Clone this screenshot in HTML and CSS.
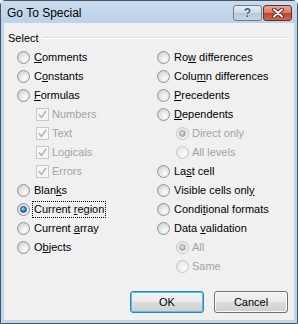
FILE: index.html
```html
<!DOCTYPE html>
<html lang="en">
<head>
    <meta charset="UTF-8">
    <title>Go To Special</title>
    <link rel="stylesheet" href="styles.css">
</head>
<body>
    <div class="window">
        <div class="titlebar">
            <span class="title">Go To Special</span>
            <div class="caption-buttons">
                <span class="cap-btn help">?</span>
                <span class="cap-btn close">
                    <svg width="14" height="10" viewBox="0 0 14 10">
                        <path d="M3 1.5 L11 8.5 M11 1.5 L3 8.5" stroke="#5a2a22" stroke-width="4" stroke-linecap="round"/>
                        <path d="M3 1.5 L11 8.5 M11 1.5 L3 8.5" stroke="#ffffff" stroke-width="2" stroke-linecap="round"/>
                    </svg>
                </span>
            </div>
        </div>
        <div class="client">
            <div class="group-head">
                <span>Select</span>
                <span class="rule"></span>
            </div>
            <div class="options">
                <div class="col">
                    <div class="opt"><span class="radio"></span><span class="lbl"><u>C</u>omments</span></div>
                    <div class="opt"><span class="radio"></span><span class="lbl">C<u>o</u>nstants</span></div>
                    <div class="opt"><span class="radio"></span><span class="lbl"><u>F</u>ormulas</span></div>
                    <div class="opt sub disabled"><span class="check"><svg width="11" height="11" viewBox="0 0 11 11"><path d="M2 5.5 L4.5 8.5 L9 2" fill="none" stroke="#b4b4b4" stroke-width="1.6"/></svg></span><span class="lbl">Numbers</span></div>
                    <div class="opt sub disabled"><span class="check"><svg width="11" height="11" viewBox="0 0 11 11"><path d="M2 5.5 L4.5 8.5 L9 2" fill="none" stroke="#b4b4b4" stroke-width="1.6"/></svg></span><span class="lbl">Text</span></div>
                    <div class="opt sub disabled"><span class="check"><svg width="11" height="11" viewBox="0 0 11 11"><path d="M2 5.5 L4.5 8.5 L9 2" fill="none" stroke="#b4b4b4" stroke-width="1.6"/></svg></span><span class="lbl">Logicals</span></div>
                    <div class="opt sub disabled"><span class="check"><svg width="11" height="11" viewBox="0 0 11 11"><path d="M2 5.5 L4.5 8.5 L9 2" fill="none" stroke="#b4b4b4" stroke-width="1.6"/></svg></span><span class="lbl">Errors</span></div>
                    <div class="opt"><span class="radio"></span><span class="lbl">Blan<u>k</u>s</span></div>
                    <div class="opt"><span class="radio checked"></span><span class="lbl focus">Current <u>r</u>egion</span></div>
                    <div class="opt"><span class="radio"></span><span class="lbl">Current <u>a</u>rray</span></div>
                    <div class="opt"><span class="radio"></span><span class="lbl">O<u>b</u>jects</span></div>
                </div>
                <div class="col">
                    <div class="opt"><span class="radio"></span><span class="lbl">Ro<u>w</u> differences</span></div>
                    <div class="opt"><span class="radio"></span><span class="lbl">Colu<u>m</u>n differences</span></div>
                    <div class="opt"><span class="radio"></span><span class="lbl"><u>P</u>recedents</span></div>
                    <div class="opt"><span class="radio"></span><span class="lbl"><u>D</u>ependents</span></div>
                    <div class="opt sub disabled"><span class="radio checked"></span><span class="lbl">Direct only</span></div>
                    <div class="opt sub disabled"><span class="radio"></span><span class="lbl">All levels</span></div>
                    <div class="opt"><span class="radio"></span><span class="lbl">La<u>s</u>t cell</span></div>
                    <div class="opt"><span class="radio"></span><span class="lbl">Visible cells onl<u>y</u></span></div>
                    <div class="opt"><span class="radio"></span><span class="lbl">Condi<u>t</u>ional formats</span></div>
                    <div class="opt"><span class="radio"></span><span class="lbl">Data <u>v</u>alidation</span></div>
                    <div class="opt sub disabled"><span class="radio checked"></span><span class="lbl">All</span></div>
                    <div class="opt sub disabled"><span class="radio"></span><span class="lbl">Same</span></div>
                </div>
            </div>
            <div class="buttons">
                <button class="btn default">OK</button>
                <button class="btn">Cancel</button>
            </div>
        </div>
    </div>
</body>
</html>
```

FILE: styles.css
```css
body {
    margin: 0;
    font-family: "Liberation Sans", Arial, sans-serif;
    font-size: 11px;
    background: #ffffff;
}
.window {
    width: 298px;
    height: 324px;
    box-sizing: border-box;
    border: 1px solid #47535f;
    border-radius: 5px 5px 0 0;
    background: #c0d4ea;
    padding: 0 3px 3px;
    display: flex;
    flex-direction: column;
}
.titlebar {
    height: 22px;
    display: flex;
    align-items: center;
    justify-content: space-between;
    background: linear-gradient(#c9dbee, #bcd2ea);
    margin: 0 -3px;
    padding: 0 5px 0 6px;
}
.title {
    font-size: 12px;
    color: #000;
    padding-top: 2px;
}
.caption-buttons {
    display: flex;
    gap: 1px;
    margin-top: 1px;
}
.cap-btn {
    width: 27px;
    height: 14px;
    border: 1px solid #6d7c8e;
    border-radius: 3px;
    display: flex;
    align-items: center;
    justify-content: center;
}
.help {
    background: linear-gradient(#e4edf7 0%, #cdd9e7 50%, #b6c7db 51%, #c7d6e7 100%);
    font-weight: bold;
    font-size: 12px;
    color: #4a5868;
    text-shadow: 0 0 1px #ffffff, 0 0 1px #ffffff;
}
.close {
    border-color: #6a2f24;
    background: linear-gradient(#e6a496 0%, #d47866 50%, #c1432d 51%, #d1684f 100%);
}
.client {
    flex: 1;
    background: #f0f0f0;
    display: flex;
    flex-direction: column;
}
.group-head {
    display: flex;
    align-items: center;
    padding: 8px 6px 0 4px;
    height: 13px;
    color: #000;
}
.rule {
    flex: 1;
    height: 1px;
    margin-left: 4px;
    background: #d5dfe5;
    border-bottom: 1px solid #ffffff;
}
.options {
    display: grid;
    grid-template-columns: 140px auto;
    padding: 4px 0 0 13px;
}
.opt {
    height: 19px;
    display: flex;
    align-items: center;
    color: #000;
    white-space: nowrap;
}
.opt.sub {
    padding-left: 19px;
}
.opt.disabled {
    color: #a3a3a3;
}
.lbl {
    margin-left: 4px;
    line-height: 13px;
}
.lbl.focus {
    outline: 1px dotted #000;
    outline-offset: 1px;
}
.radio {
    width: 11px;
    height: 11px;
    border-radius: 50%;
    border: 1px solid #949494;
    background: radial-gradient(circle at 62% 66%, #fdfdfd 0%, #e6e6e6 45%, #c6c6c6 100%);
    display: flex;
    align-items: center;
    justify-content: center;
    flex-shrink: 0;
}
.radio.checked::after {
    content: "";
    width: 5px;
    height: 5px;
    border-radius: 50%;
    border: 1px solid #1b4c7c;
    background: radial-gradient(circle at 40% 35%, #9adcfb 0%, #2c8ad0 50%, #0d4a8a 100%);
}
.disabled .radio {
    border-color: #c4c4c4;
    background: radial-gradient(circle at 62% 66%, #fbfbfb 0%, #eeeeee 50%, #e0e0e0 100%);
}
.disabled .radio.checked::after {
    border-color: #a0a0a0;
    background: radial-gradient(circle at 40% 35%, #e6e6e6 0%, #b8b8b8 60%, #9a9a9a 100%);
}
.check {
    width: 11px;
    height: 11px;
    border: 1px solid #c8c8c8;
    background: #f6f6f6;
    flex-shrink: 0;
    display: flex;
}
.check svg {
    display: block;
}
.opt.sub .lbl {
    margin-left: 3px;
}
.buttons {
    margin-top: auto;
    display: flex;
    justify-content: flex-end;
    gap: 10px;
    padding: 0 6px 7px 0;
}
.btn {
    width: 74px;
    height: 22px;
    font-family: "Liberation Sans", Arial, sans-serif;
    font-size: 11px;
    color: #000;
    border: 1px solid #707070;
    border-radius: 3px;
    background: linear-gradient(#f2f2f2 0%, #ebebeb 50%, #dddddd 51%, #cfcfcf 100%);
    box-shadow: inset 0 0 0 1px #fbfbfb;
    padding: 0;
}
.btn.default {
    border-color: #3c7fb1;
    box-shadow: inset 0 0 0 1px #48c6f4;
}
```
